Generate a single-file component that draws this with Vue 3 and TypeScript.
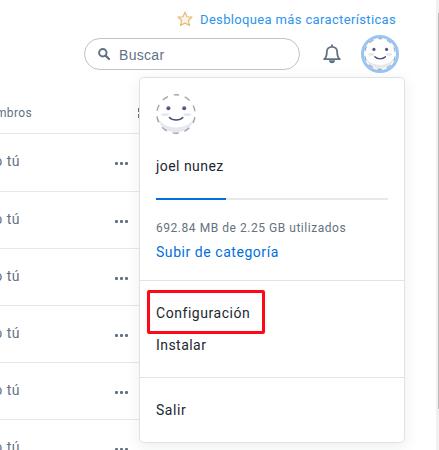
<script setup lang="ts">
import { ref } from 'vue'

interface MemberRow { id: number; access: string }

const rows = ref<MemberRow[]>(
  Array.from({ length: 6 }, (_, id) => ({ id, access: 'Solo tú' }))
)
const usedPercent = ref<number>(30.2)
</script>

<template>
  <div class="page">
    <svg class="sprites" aria-hidden="true">
      <symbol id="face" viewBox="0 0 40 40">
        <circle cx="20" cy="20" r="19.2" fill="#fff" />
        <path d="M1.2 23C8 37 32 37 38.800 23A19.200 19.200 0 0 1 1.200 23Z" fill="#e7e8ee" />
        <circle cx="20" cy="20" r="19.200" fill="none" stroke="#9ba5b2" stroke-width="1.400" stroke-dasharray="6 6.060" stroke-dashoffset="3" transform="rotate(-90 20 20)" />
        <ellipse cx="9" cy="20.500" rx="4" ry="1.600" fill="#e6e8f0" />
        <ellipse cx="31.200" cy="20.500" rx="4" ry="1.600" fill="#e6e8f0" />
        <circle cx="12.400" cy="14.300" r="2" fill="#535a83" />
        <circle cx="28.200" cy="14.300" r="2" fill="#535a83" />
        <path d="M13.500 23.500C16.500 26.800 23.800 26.800 26.800 23.500" fill="none" stroke="#484f7a" stroke-width="1.600" stroke-linecap="round" />
      </symbol>
    </svg>

    <header class="top">
      <a class="upgrade">
        <svg class="star" viewBox="0 0 16 16">
          <path d="M8 1.100 10 5.700 15 6.100 11.300 9.500 12.500 14.600 8 12 3.500 14.600 4.700 9.500 1 6.100 6 5.700Z" fill="#fbf5ea" stroke="#e5b76a" stroke-width="1.100" stroke-linejoin="round" />
        </svg>
        <span>Desbloquea más características</span>
      </a>
      <div class="tools">
        <div class="search">
          <svg class="lens" viewBox="0 0 12 12">
            <circle cx="4.800" cy="4.800" r="3.700" fill="none" stroke="#637282" stroke-width="2" />
            <path d="M7.600 7.600 11 11" stroke="#637282" stroke-width="2.200" stroke-linecap="round" />
          </svg>
          <span>Buscar</span>
        </div>
        <svg class="bell" viewBox="0 0 18 20">
          <path d="M9 .5V3M1.200 15.200H16.800C14.500 13.300 14.200 11.800 14.200 8C14.200 4.600 12 2.900 9 2.900S3.800 4.600 3.800 8C3.800 11.800 3.500 13.300 1.200 15.200Z" fill="none" stroke="#637282" stroke-width="1.800" stroke-linejoin="round" />
          <path d="M6 16.300H12A3 3 0 0 1 6 16.300Z" fill="#637282" />
        </svg>
        <div class="avatar"><svg><use href="#face" /></svg></div>
      </div>
    </header>

    <section class="list">
      <div class="list-head">
        <span class="cell head-cell">Miembros</span>
        <svg class="view" viewBox="0 0 10 10"><path d="M0 0H4V4H0ZM0 6H4V10H0ZM6 0H10V4H6ZM6 6H10V10H6Z" fill="#637282" /></svg>
      </div>
      <div v-for="row in rows" :key="row.id" class="row">
        <span class="cell">{{ row.access }}</span>
        <span class="dots"><i /><i /><i /></span>
      </div>
    </section>

    <aside class="menu">
      <div class="account">
        <svg class="portrait"><use href="#face" /></svg>
        <div class="name">joel nunez</div>
        <div class="bar"><div class="used" :style="{ width: usedPercent + '%' }" /></div>
        <div class="quota">692.84 MB de 2.25 GB utilizados</div>
        <a class="plan">Subir de categoría</a>
      </div>
      <nav class="links">
        <a class="link marked">Configuración</a>
        <a class="link install">Instalar</a>
      </nav>
      <nav class="leave"><a class="link">Salir</a></nav>
    </aside>

    <div class="scroll"><div class="thumb" /></div>
  </div>
</template>

<style>
body { background: #fff; overflow: hidden; }
</style>

<style scoped>
* { box-sizing: border-box; }
.page { position: relative; width: 439px; height: 450px; overflow: hidden; background: #fff; font-family: Roboto, "Liberation Sans", sans-serif; color: #1b2733; }
.sprites { position: absolute; width: 0; height: 0; }
.top { height: 77px; padding-top: 9px; }
.upgrade { display: flex; align-items: center; height: 20px; padding-left: 177px; gap: 7px; color: #2d94ec; font-size: 13px; letter-spacing: .35px; white-space: nowrap; }
.star { width: 16px; height: 16px; }
.tools { display: flex; align-items: center; height: 38px; margin-top: 6px; padding-left: 84px; }
.search { display: flex; align-items: center; width: 216px; height: 32px; padding-left: 13px; gap: 9px; border: 1px solid #bdc4cb; border-radius: 16px; color: #637282; font: 14px "Liberation Sans", sans-serif; letter-spacing: .3px; }
.search span { padding-top: 1px; }
.lens { width: 12px; height: 12px; }
.bell { width: 18px; height: 20px; margin-left: 23px; }
.avatar { width: 38px; height: 38px; margin-left: 20px; border: 3px solid #99c5f3; border-radius: 50%; overflow: hidden; }
.avatar svg { display: block; width: 32px; height: 32px; }
.list { width: 150px; color: #637282; }
.list-head { display: flex; align-items: center; height: 57px; padding-top: 16px; border-bottom: 1px solid #e6e8eb; }
.cell { display: flex; justify-content: flex-end; flex: none; width: 20px; font-size: 14px; letter-spacing: .5px; white-space: nowrap; }
.head-cell { width: 32px; font-size: 12px; letter-spacing: .35px; }
.view { width: 10px; height: 10px; margin-left: 106px; }
.row { display: flex; align-items: center; height: 57px; padding-bottom: 2px; border-bottom: 1px solid #e6e8eb; }
.row:nth-child(2) { height: 58px; padding-bottom: 3px; }
.dots { display: flex; gap: 2px; margin: 5px 0 0 95px; }
.dots i { width: 3px; height: 3px; border-radius: 1px; background: #637282; }
.menu { position: absolute; left: 139px; top: 77px; width: 266px; height: 366px; background: #fff; border: 1px solid #dfe2e5; border-radius: 5px; box-shadow: 0 4px 16px rgba(27, 39, 51, .08); font-size: 14px; letter-spacing: .55px; }
.account { height: 203px; padding: 16px 16px 0; border-bottom: 1px solid #e1e4e8; }
.portrait { display: block; width: 40px; height: 40px; }
.name { margin-top: 22px; line-height: 20px; letter-spacing: .45px; }
.bar { height: 2px; margin-top: 22px; background: #e6e8eb; }
.used { height: 2px; background: #0070e0; }
.quota { margin-top: 18px; line-height: 20px; font-size: 12px; letter-spacing: .54px; color: #637282; white-space: nowrap; }
.plan { display: block; margin-top: 4px; line-height: 20px; color: #0070e0; }
.links { display: flex; flex-direction: column; height: 97px; padding: 9px 7px 0; border-bottom: 1px solid #e1e4e8; }
.link { display: block; padding-left: 9px; line-height: 20px; }
.marked { width: 118px; height: 44px; padding: 10px 0 0 6px; border: 3px solid #ff0716; border-radius: 2px; }
.install { margin-top: 1px; letter-spacing: .45px; }
.leave { padding: 22px 7px 0; }
.scroll { position: absolute; top: 0; right: 0; width: 3px; height: 450px; background: #f0f0f0; }
.thumb { width: 1px; height: 396px; margin: 13px 0 0 2px; background: #bcbcbc; }
</style>
